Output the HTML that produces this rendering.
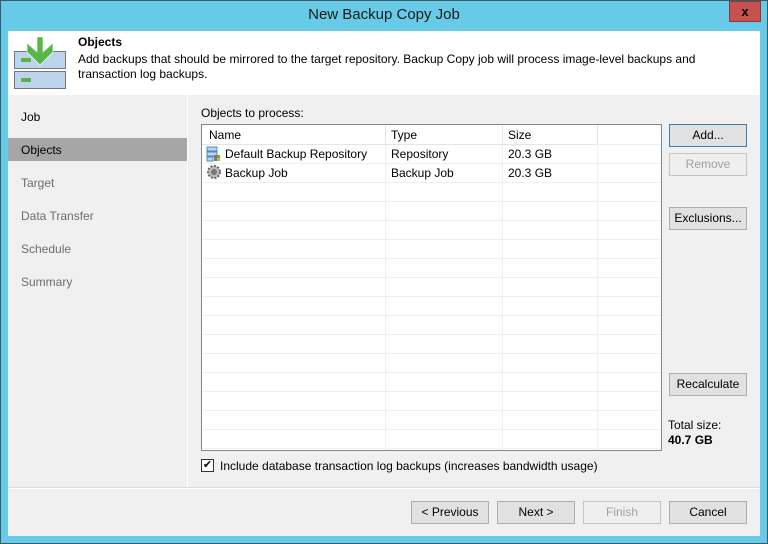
<!DOCTYPE html>
<html><head><style>
*{margin:0;padding:0;box-sizing:border-box}
body{width:768px;height:544px;background:#67cbe8;font-family:"Liberation Sans",sans-serif;font-size:12px;color:#000;position:relative;overflow:hidden}
.abs{position:absolute}
.frame{left:0;top:0;width:768px;height:544px;border:1px solid #3a5a66}
.title{left:0;top:6px;width:768px;text-align:center;font-size:15px;color:#1a1a1a}
.close{left:729px;top:1px;width:32px;height:21px;background:#c75050;border:1px solid #8b3a3a;color:#000;font-weight:bold;text-align:center;font-size:13px;line-height:19px}
.content{left:8px;top:31px;width:752px;height:505px;background:#f0f0f0}
.header{left:8px;top:31px;width:752px;height:64px;background:#fff}
.btn{position:absolute;height:23px;background:#e1e1e1;border:1px solid #adadad;text-align:center;line-height:21px}
.dis{color:#a0a0a0;background:#efefef;border-color:#c4c4c4}
.nav{position:absolute;left:21px}
</style></head><body>
<div class="abs frame"></div>
<div class="abs title">New Backup Copy Job</div>
<div class="abs close">x</div>
<div class="abs content"></div>
<div class="abs header"></div>
<svg class="abs" style="left:14px;top:36px" width="52" height="54">
<rect x="0.5" y="15.5" width="51" height="17" fill="#bcd5ec" stroke="#777"/>
<rect x="0.5" y="35.5" width="51" height="17" fill="#bcd5ec" stroke="#777"/>
<rect x="7" y="22" width="10" height="4" fill="#5bb346"/>
<rect x="7" y="42" width="10" height="4" fill="#5bb346"/>
<path d="M23 1h6v15l10-9v9l-13 13l-13-13v-9l10 9z" fill="#56b646" stroke="#fff" stroke-width="0.6"/>
</svg>
<div class="abs" style="left:78px;top:35px;font-weight:bold">Objects</div>
<div class="abs" style="left:78px;top:52px;line-height:15px;width:660px">Add backups that should be mirrored to the target repository. Backup Copy job will process image-level backups and transaction log backups.</div>
<div class="abs" style="left:187px;top:95px;width:1px;height:393px;background:#fff"></div>
<div class="abs" style="left:8px;top:138px;width:179px;height:23px;background:#a6a6a6"></div>
<div class="nav" style="top:110px">Job</div>
<div class="nav" style="top:143px">Objects</div>
<div class="nav" style="top:176px;color:#6d6d6d">Target</div>
<div class="nav" style="top:209px;color:#6d6d6d">Data Transfer</div>
<div class="nav" style="top:242px;color:#6d6d6d">Schedule</div>
<div class="nav" style="top:275px;color:#6d6d6d">Summary</div>
<div class="abs" style="left:201px;top:106px">Objects to process:</div>
<div class="abs" style="left:201px;top:124px;width:461px;height:327px;background:#fff;border:1px solid #828790;overflow:hidden">
<svg width="459" height="325" style="position:absolute;left:0;top:0">
<g stroke="#f0f0f0">
<line x1="183.5" y1="0" x2="183.5" y2="325"/><line x1="300.5" y1="0" x2="300.5" y2="325"/><line x1="395.5" y1="0" x2="395.5" y2="325"/>
<line x1="0" y1="19.5" x2="459" y2="19.5"/>
<line x1="0" y1="38.5" x2="459" y2="38.5"/><line x1="0" y1="57.5" x2="459" y2="57.5"/><line x1="0" y1="76.5" x2="459" y2="76.5"/><line x1="0" y1="95.5" x2="459" y2="95.5"/><line x1="0" y1="114.5" x2="459" y2="114.5"/><line x1="0" y1="133.5" x2="459" y2="133.5"/><line x1="0" y1="152.5" x2="459" y2="152.5"/><line x1="0" y1="171.5" x2="459" y2="171.5"/><line x1="0" y1="190.5" x2="459" y2="190.5"/><line x1="0" y1="209.5" x2="459" y2="209.5"/><line x1="0" y1="228.5" x2="459" y2="228.5"/><line x1="0" y1="247.5" x2="459" y2="247.5"/><line x1="0" y1="266.5" x2="459" y2="266.5"/><line x1="0" y1="285.5" x2="459" y2="285.5"/><line x1="0" y1="304.5" x2="459" y2="304.5"/><line x1="0" y1="323.5" x2="459" y2="323.5"/>
</g>
<g stroke="#e5e5e5"><line x1="0" y1="19.5" x2="395" y2="19.5"/><line x1="183.5" y1="0" x2="183.5" y2="19"/><line x1="300.5" y1="0" x2="300.5" y2="19"/><line x1="395.5" y1="0" x2="395.5" y2="19"/></g>
<rect x="5" y="22" width="10" height="4" fill="#bcd5ec" stroke="#4a8ac4"/>
<rect x="5" y="27" width="10" height="4" fill="#bcd5ec" stroke="#4a8ac4"/>
<rect x="5" y="32" width="6" height="4" fill="#bcd5ec" stroke="#4a8ac4"/>
<rect x="12" y="30" width="3" height="3" fill="#e74c2e"/><rect x="15" y="30" width="3" height="3" fill="#5bb346"/>
<rect x="12" y="33" width="3" height="3" fill="#2c8ee0"/><rect x="15" y="33" width="3" height="3" fill="#f4b400"/>
<circle cx="12" cy="47" r="6" fill="#bbb" stroke="#666" stroke-width="2" stroke-dasharray="2 1.5"/>
<circle cx="12" cy="47" r="3" fill="#777"/>
</svg>
<div class="abs" style="left:7px;top:3px">Name</div>
<div class="abs" style="left:189px;top:3px">Type</div>
<div class="abs" style="left:306px;top:3px">Size</div>
<div class="abs" style="left:23px;top:22px">Default Backup Repository</div>
<div class="abs" style="left:189px;top:22px">Repository</div>
<div class="abs" style="left:306px;top:22px">20.3 GB</div>
<div class="abs" style="left:23px;top:41px">Backup Job</div>
<div class="abs" style="left:189px;top:41px">Backup Job</div>
<div class="abs" style="left:306px;top:41px">20.3 GB</div>
</div>
<div class="btn" style="left:669px;top:124px;width:78px;border-color:#3c7fb1">Add...</div>
<div class="btn dis" style="left:669px;top:153px;width:78px">Remove</div>
<div class="btn" style="left:669px;top:207px;width:78px">Exclusions...</div>
<div class="btn" style="left:669px;top:373px;width:78px">Recalculate</div>
<div class="abs" style="left:668px;top:418px">Total size:</div>
<div class="abs" style="left:668px;top:433px;font-weight:bold">40.7 GB</div>
<div class="abs" style="left:201px;top:459px;width:13px;height:13px;border:1px solid #333;background:#fff;font-size:11px;line-height:11px;text-align:center">✔</div>
<div class="abs" style="left:220px;top:459px">Include database transaction log backups (increases bandwidth usage)</div>
<div class="abs" style="left:8px;top:488px;width:752px;height:1px;background:#fff"></div>
<div class="abs" style="left:8px;top:487px;width:752px;height:1px;background:#dcdcdc"></div>
<div class="btn" style="left:411px;top:501px;width:78px">&lt; Previous</div>
<div class="btn" style="left:497px;top:501px;width:78px">Next &gt;</div>
<div class="btn dis" style="left:583px;top:501px;width:78px">Finish</div>
<div class="btn" style="left:669px;top:501px;width:78px">Cancel</div>
</body></html>
